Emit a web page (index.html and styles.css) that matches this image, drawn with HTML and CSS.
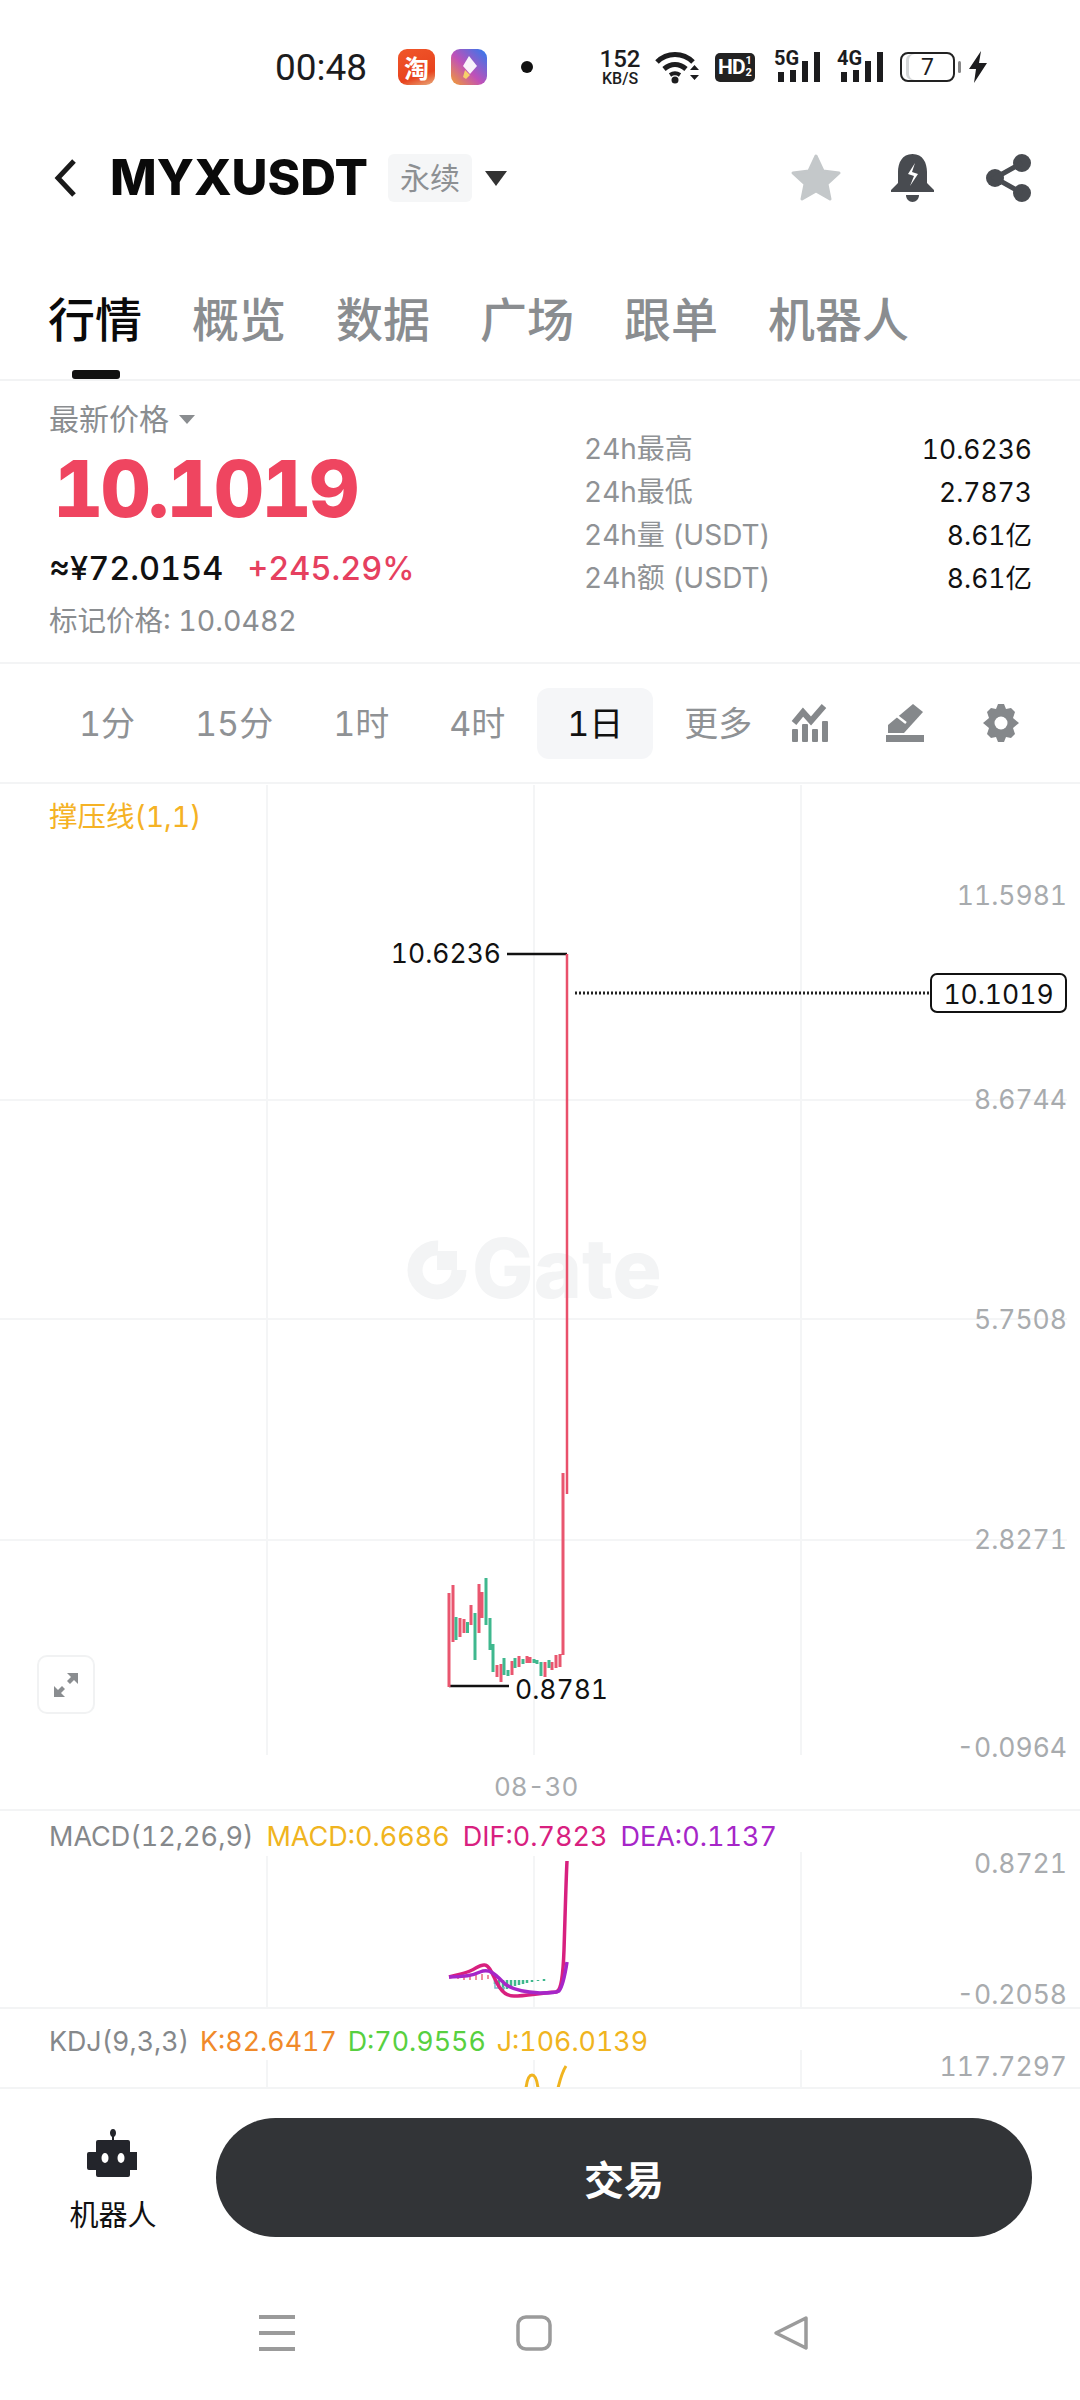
FILE: index.html
```html
<!DOCTYPE html>
<html lang="zh">
<head>
<meta charset="utf-8">
<title>MYXUSDT</title>
<link rel="stylesheet" href="styles.css">
</head>
<body>
<div class="page">
  <div class="status">
    <span class="time">00:48</span>
    <span class="app-taobao">淘</span>
    <svg class="app-blue" viewBox="0 0 36 36"><defs><linearGradient id="bl" x1="0" y1="1" x2="1" y2="0"><stop offset="0" stop-color="#f4a02e"/><stop offset=".45" stop-color="#c050b8"/><stop offset="1" stop-color="#2a7bf0"/></linearGradient></defs><rect width="36" height="36" rx="9" fill="url(#bl)"/><path d="M18 7l8 10-7 8-7-8z" fill="#fff" opacity=".92"/><path d="M14 21l5 5-4 4-3-2z" fill="#f6d06a"/></svg>
    <span class="dot"></span>
    <div class="speed"><span class="speed-n">152</span><span class="speed-u">KB/S</span></div>
    <svg class="wifi" viewBox="0 0 45 34"><path d="M2 12C12 2 28 2 38 12" fill="none" stroke="#1c1c1e" stroke-width="5"/><path d="M9 19c7-6 15-6 22 0" fill="none" stroke="#1c1c1e" stroke-width="5"/><path d="M15 25c3-2 7-2 10 0" fill="none" stroke="#1c1c1e" stroke-width="4"/><circle cx="20" cy="30" r="3.5" fill="#1c1c1e"/><path d="M35 20l4.500-5 4.500 5zM35 25h9l-4.500 5z" fill="#1c1c1e"/></svg>
    <div class="hd"><span class="hd-t">HD</span><span class="hd-n"><i>1</i><i>2</i></span></div>
    <svg class="sig" viewBox="0 -6 46 38"><text x="0" y="15" class="sig-t">5G</text><rect x="4" y="22" width="6" height="10" fill="#1c1c1e"/><rect x="16" y="20" width="6" height="12" fill="#1c1c1e"/><rect x="28" y="11" width="6" height="21" fill="#1c1c1e"/><rect x="40" y="2" width="6" height="30" fill="#1c1c1e"/></svg>
    <svg class="sig sig4" viewBox="0 -6 46 38"><text x="0" y="15" class="sig-t">4G</text><rect x="4" y="22" width="6" height="10" fill="#1c1c1e"/><rect x="16" y="20" width="6" height="12" fill="#1c1c1e"/><rect x="28" y="11" width="6" height="21" fill="#1c1c1e"/><rect x="40" y="2" width="6" height="30" fill="#1c1c1e"/></svg>
    <div class="batt"><span class="batt-n">7</span></div>
    <svg class="bolt" viewBox="0 0 20 32"><path d="M13 0L1 18h7l-2 14L19 12h-8z" fill="#1c1c1e"/></svg>
  </div>

  <div class="header">
    <svg class="back" viewBox="0 0 24 40"><path d="M20 3L4 20l16 17" fill="none" stroke="#1a1a1a" stroke-width="5"/></svg>
    <span class="symbol">MYXUSDT</span>
    <span class="tag">永续</span>
    <span class="caret"></span>
    <div class="actions">
      <svg class="act-star" viewBox="0 0 52 48"><path d="M26 2l7 15 16 2-12 11 3 15-14-8-14 8 3-15L3 19l16-2z" fill="#c4c8ca" stroke="#c4c8ca" stroke-width="3" stroke-linejoin="round"/></svg>
      <svg class="act-bell" viewBox="0 0 45 48"><path d="M22.500 0C33 0 37 9 37 18v11l7 7v2H1v-2l7-7V18C8 9 12 0 22.500 0z" fill="#484b50"/><path d="M16 41h13c0 4-3 7-6.500 7S16 45 16 41z" fill="#484b50"/><path d="M25 9l-7 11 6 2-4 10 8-12-6-2z" fill="#fff"/></svg>
      <svg class="act-share" viewBox="0 0 45 48"><g fill="#484b50"><circle cx="36" cy="9" r="9"/><circle cx="36" cy="39" r="9"/><circle cx="9" cy="24" r="9"/></g><path d="M36 9L9 24l27 15" fill="none" stroke="#484b50" stroke-width="5"/></svg>
    </div>
  </div>

  <div class="tabs">
    <span class="tab tab-on">行情</span>
    <span class="tab">概览</span>
    <span class="tab">数据</span>
    <span class="tab">广场</span>
    <span class="tab">跟单</span>
    <span class="tab">机器人</span>
  </div>

  <div class="price">
    <div class="price-left">
      <div class="latest">最新价格<span class="mini-caret"></span></div>
      <div class="last">10.1019</div>
      <div class="sub"><span class="cny">≈¥72.0154</span><span class="chg">+245.29%</span></div>
      <div class="mark">标记价格: 10.0482</div>
    </div>
    <div class="stats">
      <div class="stat"><span class="k">24h最高</span><span class="v">10.6236</span></div>
      <div class="stat"><span class="k">24h最低</span><span class="v">2.7873</span></div>
      <div class="stat"><span class="k">24h量 (USDT)</span><span class="v">8.61亿</span></div>
      <div class="stat"><span class="k">24h额 (USDT)</span><span class="v">8.61亿</span></div>
    </div>
  </div>

  <div class="intervals">
    <span class="iv">1分</span>
    <span class="iv">15分</span>
    <span class="iv">1时</span>
    <span class="iv">4时</span>
    <span class="iv iv-on">1日</span>
    <span class="iv">更多</span>
    <div class="tools">
      <svg class="tool" viewBox="0 0 38 38"><path d="M3 19l9-11 8 9 13-15" fill="none" stroke="#85888b" stroke-width="6"/><g fill="#85888b"><rect x="1" y="25" width="6" height="13" rx="1"/><rect x="11" y="20" width="6" height="18" rx="1"/><rect x="21" y="25" width="6" height="13" rx="1"/><rect x="31" y="17" width="6" height="21" rx="1"/></g></svg>
      <svg class="tool tool-pen" viewBox="0 0 38 38"><path d="M27 0l10 8-19 21H2v-8z" fill="#85888b"/><path d="M0 31h38v7H0z" fill="#85888b"/><path d="M11 12l9 7" stroke="#fff" stroke-width="2.500"/></svg>
      <svg class="tool tool-gear" viewBox="0 0 36 38"><path d="M15 0h6l2 5 5-1 4 4-2 6 6 5-6 5 2 6-4 4-5-1-2 5h-6l-2-5-5 1-4-4 2-6-6-5 6-5-2-6 4-4 5 1z" fill="#85888b"/><circle cx="18" cy="19" r="6.500" fill="#fff"/></svg>
    </div>
  </div>

  <div class="panel panel-main">
    <svg class="plot" viewBox="0 784 1080 1025">
      <g stroke="#f4f5f6" stroke-width="2"><path d="M267 785V1755M534 785V1755M801 785V1755M0 1100H1067M0 1319H1067M0 1540H1067"/></g>
      <circle cx="437" cy="1270" r="22" fill="none" stroke="#f3f4f5" stroke-width="15" stroke-dasharray="104 34"/>
      <rect x="437" y="1251" width="20" height="19" fill="#f3f4f5"/>
      <text x="472" y="1298" class="wm">Gate</text>
      <path d="M507 954H567" stroke="#111" stroke-width="2.500"/>
      <path d="M567 954V1494" stroke="#e9506b" stroke-width="2.500"/>
      <path d="M575 993H930" stroke="#222" stroke-width="3" stroke-dasharray="2 2"/>
      <path d="M449 1686H509" stroke="#111" stroke-width="2.500"/>
      <g stroke="#e9566f" stroke-width="3">
        <path d="M449 1593V1687M453 1585V1642M460 1618V1637M464 1619V1633M471 1605V1625M479 1584V1633M482 1592V1618M497 1665V1677M501 1664V1682M512 1661V1675M519 1656V1667M527 1656V1663M530 1657V1663M545 1662V1677M552 1662V1670M556 1655V1668M560 1654V1667M563 1473V1655"/>
      </g>
      <g stroke="#3fb88e" stroke-width="3">
        <path d="M456 1617V1640M467.500 1622V1633M475 1613V1660M486 1578V1625M490 1618V1650M493 1644V1672M504 1658V1675M508 1670V1676M515 1658V1668M523 1659V1664M534 1659V1663M537 1660V1664M541 1662V1676M549 1660V1668"/>
      </g>
    </svg>
    <span class="legend">撑压线(1,1)</span>
    <span class="ax ax1">11.5981</span>
    <span class="ax ax2">8.6744</span>
    <span class="ax ax3">5.7508</span>
    <span class="ax ax4">2.8271</span>
    <span class="ax ax5">-0.0964</span>
    <span class="hi">10.6236</span>
    <span class="lo">0.8781</span>
    <span class="now">10.1019</span>
    <span class="date">08-30</span>
    <button class="expand"><svg viewBox="0 0 28 28"><path d="M15 2h11v11l-4-4-4 4-3-3 4-4zM13 26H2V15l4 4 4-4 3 3-4 4z" fill="#8a8d90"/></svg></button>
  </div>

  <div class="panel panel-macd">
    <svg class="plot" viewBox="0 1811 1080 196">
      <path d="M267 1852V2008M534 1852V2008M801 1852V2008" stroke="#f4f5f6" stroke-width="2"/>
      <g stroke="#ef8d9d" stroke-width="2"><path d="M458 1977v2M464 1977v3M470 1975v5M476 1974v6M482 1974v6M488 1975v4"/></g>
      <g stroke="#3fb88e" stroke-width="2.500"><path d="M495 1980v4M499 1980v8M503 1980v10M507 1980v9M511 1980v7M515 1980v6M519 1980v5M523 1980v4M527 1980v3M532 1980v2M538 1980v1M544 1979v2"/></g>
      <path d="M495 1978v10h10" fill="none" stroke="#7ab8c8" stroke-width="1.500"/>
      <path d="M449 1977C456 1975 463 1974 470 1971C477 1968 480 1964 485 1965C491 1966 494 1980 500 1988C504 1994 508 1996 514 1996C525 1996 540 1993 556 1992C561 1991 563 1978 564 1950C565 1920 566 1880 567 1861" fill="none" stroke="#d8207f" stroke-width="3.500"/>
      <path d="M449 1977C458 1977 470 1977 480 1972C490 1968 495 1974 505 1984C513 1990 525 1992 540 1993C550 1993 556 1993 559 1991C563 1986 565 1975 567 1962" fill="none" stroke="#a626c8" stroke-width="3.500"/>
    </svg>
    <div class="ind ind-m"><span class="ind-n">MACD(12,26,9)</span><span class="c-y">MACD:0.6686</span><span class="c-p">DIF:0.7823</span><span class="c-v">DEA:0.1137</span></div>
    <span class="ax ax6">0.8721</span>
    <span class="ax ax7">-0.2058</span>
  </div>

  <div class="panel panel-kdj">
    <svg class="plot" viewBox="0 2009 1080 78">
      <path d="M267 2050V2088M534 2050V2088M801 2050V2088" stroke="#f4f5f6" stroke-width="2"/>
      <path d="M526 2088C527 2080 529 2075 532 2075C535 2075 537 2080 538 2088M558 2088C560 2080 562 2072 566 2066" fill="none" stroke="#f0b420" stroke-width="3"/>
    </svg>
    <div class="ind ind-k"><span class="ind-n">KDJ(9,3,3)</span><span class="c-o">K:82.6417</span><span class="c-g">D:70.9556</span><span class="c-y">J:106.0139</span></div>
    <span class="ax ax8">117.7297</span>
  </div>

  <div class="bottom">
    <div class="bot">
      <svg class="bot-ic" viewBox="0 0 52 48"><path d="M26 0c2 0 3 2 3 4s-1 3-2 4v3h14a2 2 0 0 1 2 2v10h7v18h-7v5a2 2 0 0 1-2 2H11a2 2 0 0 1-2-2v-5H2a2 2 0 0 1-2-2V25a2 2 0 0 1 2-2h7V13a2 2 0 0 1 2-2h14V8c-1-1-2-2-2-4s1-4 3-4z" fill="#23252b"/><ellipse cx="18" cy="29" rx="3.500" ry="5" fill="#fff"/><ellipse cx="34" cy="29" rx="3.500" ry="5" fill="#fff"/></svg>
      <span class="bot-t">机器人</span>
    </div>
    <button class="trade">交易</button>
  </div>

  <div class="nav">
    <svg class="nav-ic" viewBox="0 0 36 36"><path d="M0 2h36M0 18h36M0 34h36" stroke="#9b9b9b" stroke-width="4"/></svg>
    <svg class="nav-ic" viewBox="0 0 36 36"><rect x="2" y="2" width="32" height="32" rx="8" fill="none" stroke="#9b9b9b" stroke-width="3.500"/></svg>
    <svg class="nav-ic" viewBox="0 0 36 36"><path d="M33 3L3 18l30 15z" fill="none" stroke="#9b9b9b" stroke-width="3.500" stroke-linejoin="round"/></svg>
  </div>
</div>
</body>
</html>
```

FILE: styles.css
```css
* { box-sizing: border-box; }
html, body { margin: 0; padding: 0; background: #fff; }
body { font-family: Inter, "Noto Sans CJK SC", sans-serif; color: #111; font-variant-numeric: tabular-nums; }
.page { width: 1080px; height: 2400px; overflow: hidden; display: flex; flex-direction: column; }

.status { height: 134px; flex: none; display: flex; align-items: center; padding-left: 275px; font-family: Roboto, "Noto Sans CJK SC", sans-serif; color: #1c1c1e; }
.time { width: 93px; font-size: 37px; line-height: 1; }
.app-taobao { width: 37px; height: 36px; margin-left: 30px; border-radius: 9px; background: linear-gradient(160deg, #f0562a, #e8431e 70%, #e8b080); color: #fff; font: 700 25px/36px "Noto Sans CJK SC", sans-serif; text-align: center; }
.app-blue { width: 36px; height: 36px; margin-left: 16px; }
.dot { width: 12px; height: 12px; margin-left: 34px; border-radius: 50%; background: #111; }
.speed { width: 40px; margin-left: 67px; display: flex; flex-direction: column; align-items: center; }
.speed-n { font-size: 24px; font-weight: 500; line-height: 24px; }
.speed-u { font-size: 16px; font-weight: 500; line-height: 16px; }
.wifi { width: 45px; height: 34px; margin-left: 15px; }
.hd { width: 40px; height: 29px; margin-left: 15px; border-radius: 5px; background: #222; color: #fff; display: flex; align-items: center; justify-content: center; gap: 1px; font-weight: 700; }
.hd-t { font-size: 21px; letter-spacing: -1px; }
.hd-n { display: flex; flex-direction: column; font-size: 11px; line-height: 12px; }
.hd-n i { font-style: normal; }
.sig { width: 46px; height: 38px; margin-left: 19px; margin-bottom: 8px; }
.sig4 { margin-left: 17px; }
.sig-t { font: 700 20px Roboto, sans-serif; fill: #1c1c1e; }
.batt { width: 55px; height: 30px; margin-left: 17px; margin-right: 6px; border: 2.500px solid #222; border-radius: 8px; position: relative; display: flex; align-items: center; justify-content: center; font-size: 23px; box-shadow: inset 4px 0 0 #fff, inset 7px 0 0 #d5d7d8; }
.batt::after { content: ""; position: absolute; right: -8px; top: 7px; width: 3px; height: 12px; background: #888; border-radius: 2px; }
.bolt { width: 20px; height: 32px; margin-left: 7px; }

.header { height: 88px; flex: none; display: flex; align-items: center; padding: 0 49px 0 54px; }
.back { width: 24px; height: 40px; }
.symbol { margin-left: 32px; font-size: 49.500px; font-weight: 800; color: #0a0a0a; line-height: 1; }
.tag { margin-left: 20px; width: 84px; height: 48px; border-radius: 6px; background: #f5f6f7; color: #8d9093; font-size: 30px; line-height: 48px; text-align: center; }
.caret { margin-left: 13px; width: 0; height: 0; border-left: 11px solid transparent; border-right: 11px solid transparent; border-top: 15px solid #333; }
.actions { margin-left: auto; display: flex; align-items: center; }
.act-star { width: 52px; height: 48px; }
.act-bell { width: 45px; height: 48px; margin-left: 48px; }
.act-share { width: 45px; height: 48px; margin-left: 51px; }

.tabs { height: 159px; flex: none; display: flex; gap: 50px; padding: 75px 0 0 48px; border-bottom: 2px solid #f2f3f4; }
.tab { position: relative; font-size: 47px; line-height: 46px; height: 46px; color: #8a8d90; font-weight: 500; }
.tab-on { color: #0a0a0a; }
.tab-on::after { content: ""; position: absolute; left: 24px; top: 73px; width: 48px; height: 9px; border-radius: 3px; background: #111; }

.price { height: 283px; flex: none; display: grid; grid-template-columns: 535px 1fr; padding: 20px 48px 0 49px; border-bottom: 2px solid #f3f4f5; }
.latest { height: 36px; line-height: 36px; font-size: 30px; color: #8a8d90; display: flex; align-items: center; }
.mini-caret { margin-left: 10px; width: 0; height: 0; border-left: 8px solid transparent; border-right: 8px solid transparent; border-top: 9px solid #8a8d90; }
.last { height: 104px; line-height: 104px; margin-left: 4px; font-size: 78px; font-weight: 800; letter-spacing: -2.800px; color: #ef4560; }
.sub { height: 56px; line-height: 56px; display: flex; gap: 24px; font-size: 32.500px; font-weight: 500; }
.chg { color: #e6405f; }
.mark { height: 48px; line-height: 48px; font-size: 28.500px; color: #8a8d90; }
.stats { padding-top: 27px; }
.stat { height: 43px; line-height: 43px; display: flex; justify-content: space-between; font-size: 28px; }
.k { color: #8f9295; }
.v { color: #111; font-size: 26.500px; }

.intervals { height: 120px; flex: none; display: flex; align-items: center; gap: 60px; padding: 0 0 0 79px; border-bottom: 2px solid #f3f4f5; }
.iv { flex: none; white-space: nowrap; font-size: 34px; color: #8f9295; line-height: 71px; height: 71px; }
.iv-on { margin: 0 -29px 0 -28px; padding: 0 30px; border-radius: 12px; background: #f5f6f8; color: #111; }
.tools { margin-left: -21px; display: flex; align-items: center; }
.tool { width: 38px; height: 38px; flex: none; }
.tool-pen { margin-left: 57px; }
.tool-gear { width: 36px; margin-left: 59px; }

.panel { position: relative; flex: none; }
.plot { position: absolute; left: 0; top: 0; width: 1080px; height: 100%; display: block; }
.panel-main { height: 1027px; border-bottom: 2px solid #f3f4f5; }
.panel-macd { height: 198px; border-bottom: 2px solid #f3f4f5; }
.panel-kdj { height: 80px; border-bottom: 2px solid #f3f4f5; }
.wm { font: 800 82px Inter, sans-serif; fill: #f3f4f5; }
.legend { position: absolute; left: 49px; top: 15px; font-size: 28.500px; line-height: 36px; color: #f5b225; }
.ax { position: absolute; right: 13px; font-size: 26.500px; line-height: 34px; color: #a8abae; }
.ax1 { top: 94px; }
.ax2 { top: 298px; }
.ax3 { top: 518px; }
.ax4 { top: 738px; }
.ax5 { top: 946px; }
.ax6 { top: 35px; }
.ax7 { top: 166px; }
.ax8 { top: 40px; }
.hi, .lo { position: absolute; font-size: 26.500px; line-height: 34px; color: #111; }
.hi { right: 579px; top: 152px; }
.lo { left: 515px; top: 888px; }
.now { position: absolute; left: 930px; top: 189px; width: 137px; height: 40px; border: 2px solid #111; border-radius: 7px; font-size: 26.500px; line-height: 38px; text-align: center; color: #111; background: #fff; }
.date { position: absolute; left: 494px; top: 986px; font-size: 26px; line-height: 34px; color: #a8abae; }
.expand { position: absolute; left: 37px; top: 871px; width: 58px; height: 59px; padding: 0; border: 2px solid #f1f2f3; border-radius: 10px; background: #fff; display: flex; align-items: center; justify-content: center; }
.expand svg { width: 28px; height: 28px; }
.ind { position: absolute; left: 49px; display: flex; gap: 13px; font-size: 27px; line-height: 38px; white-space: nowrap; background: #fff; }
.ind-m { top: 7px; }
.ind-k { top: 13px; gap: 11px; font-size: 26.800px; }
.ind-n { color: #85888b; }
.c-y { color: #f0b420; }
.c-p { color: #d8207f; }
.c-v { color: #a626c8; }
.c-o { color: #f08a2a; }
.c-g { color: #58d040; }

.bottom { height: 165px; flex: none; display: flex; align-items: flex-start; padding: 29px 48px 0 0; }
.bot { width: 216px; padding: 11px 0 0 10px; display: flex; flex-direction: column; align-items: center; gap: 23px; flex: none; }
.bot-ic { width: 52px; height: 48px; }
.bot-t { font-size: 29px; line-height: 32px; white-space: nowrap; color: #111; }
.trade { flex: 1; height: 119px; border: 0; border-radius: 60px; background: #323437; color: #fff; font: 700 40px "Noto Sans CJK SC", sans-serif; }

.nav { flex: 1; display: flex; justify-content: center; gap: 221px; padding: 61px 12px 0 0; }
.nav-ic { width: 36px; height: 36px; }
```
